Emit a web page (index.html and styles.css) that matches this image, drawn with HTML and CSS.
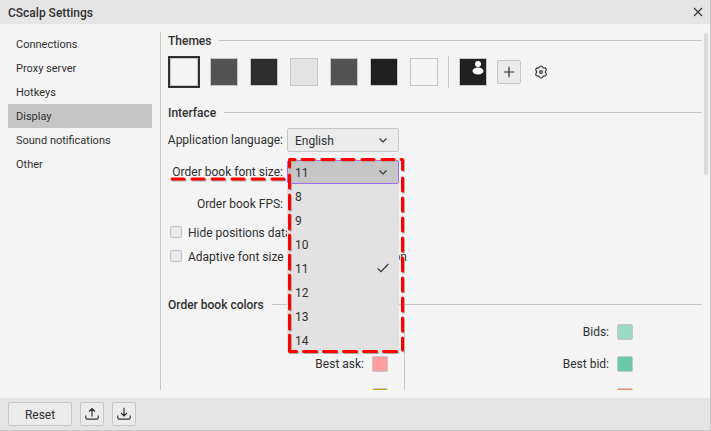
FILE: index.html
```html
<!DOCTYPE html>
<html lang="en">
<head>
<meta charset="utf-8">
<title>CScalp Settings</title>
<link rel="stylesheet" href="styles.css">
</head>
<body>
<div class="window">
  <header class="titlebar">
    <h1>CScalp Settings</h1>
    <button class="plain close" aria-label="Close"><svg width="10" height="10" viewBox="0 0 10 10"><path d="M1 1l8 8M9 1l-8 8"/></svg></button>
  </header>
  <div class="body">
    <nav class="sidebar">
      <a href="#connections">Connections</a>
      <a href="#proxy">Proxy server</a>
      <a href="#hotkeys">Hotkeys</a>
      <a href="#display" class="active" aria-current="page">Display</a>
      <a href="#sound">Sound notifications</a>
      <a href="#other">Other</a>
    </nav>
    <main class="content">
      <h2>Themes</h2>
      <div class="themes">
        <button class="theme selected light" aria-label="Theme 1"></button>
        <button class="theme gray" aria-label="Theme 2"></button>
        <button class="theme dark" aria-label="Theme 3"></button>
        <button class="theme pale" aria-label="Theme 4"></button>
        <button class="theme gray" aria-label="Theme 5"></button>
        <button class="theme black" aria-label="Theme 6"></button>
        <button class="theme light" aria-label="Theme 7"></button>
        <span class="separator"></span>
        <button class="theme black" aria-label="User theme"><svg width="26" height="26" viewBox="0 0 26 26"><circle class="solid" cx="18" cy="5" r="3"/><ellipse class="solid" cx="18" cy="12" rx="5.5" ry="3.5"/></svg></button>
        <button class="btn icon" aria-label="Add theme"><svg width="12" height="12" viewBox="0 0 12 12"><path d="M6 .8v10.400M.8 6h10.400"/></svg></button>
        <button class="plain gear" aria-label="Theme settings"><svg width="16" height="14" viewBox="-1 0 16 14"><path d="M4.600 2.900C5.600 2.400 5.600 1 7 1S8.400 2.400 9.400 2.900C10.800 2.600 11.600 3 12.200 4S11.400 6 11.400 7 12.900 9 12.200 10 10.400 11.200 9.400 11.100C8.400 11.600 8.400 13 7 13S5.600 11.600 4.600 11.100C3.400 11.300 2.400 11 1.800 10S2.600 8 2.600 7 1.100 5 1.800 4 3.600 2.700 4.600 2.900z"/><circle cx="7" cy="7" r="1.400"/></svg></button>
      </div>
      <h2>Interface</h2>
      <div class="form">
        <label for="language">Application language:</label>
        <div class="field"><select id="language"><option>English</option></select><svg class="chevron" width="8" height="5" viewBox="0 0 8 5"><path d="M.5 .5L4 4 7.500 .5"/></svg></div>
        <label for="font-size">Order book font size:<svg class="underline" width="120" height="6" viewBox="0 0 120 6"><path class="shade" d="M6 4h12M26 4h12M46 4h12M66 4h12M86 4h12M106 4h12"/><path class="mark" d="M5 3h12M25 3h12M45 3h12M65 3h12M85 3h12M105 3h12"/></svg></label>
        <div class="field open">
          <select id="font-size"><option>11</option></select><svg class="chevron" width="8" height="5" viewBox="0 0 8 5"><path d="M.5 .5L4 4 7.500 .5"/></svg>
          <ul class="menu">
            <li>8</li><li>9</li><li>10</li>
            <li>11<svg width="12" height="10" viewBox="0 0 12 10"><path d="M.7 5.500L4 8.700 11.300 1"/></svg></li>
            <li>12</li><li>13</li><li>14</li>
          </ul>
          <svg class="frame" width="122" height="200" viewBox="0 0 122 200">
            <defs><g id="dashes"><path d="M3.500 11V3.500H9M16 3.500h12M36 3.500h12M56 3.500h12M76 3.500h12M96 3.500h12M115 3.500h1.500v10M3.500 19v13M3.500 39v14M3.500 59v14M3.500 79v14M3.500 99v14M3.500 119v14M3.500 139v14M3.500 159v14M3.500 179v16.500h7M17.500 195.500h13M37.500 195.500h13M57.500 195.500h13M77.500 195.500h13M97.500 195.500h13M116.500 22v13M116.500 42v13M116.500 62v13M116.500 82v13M116.500 102v13M116.500 122v13M116.500 142v13M116.500 162v13M116.500 182v12"/></g></defs>
            <use class="shade" href="#dashes" x="1" y="1"/><use class="mark" href="#dashes"/>
          </svg>
        </div>
        <span class="label">Order book FPS:</span>
      </div>
      <div class="checks">
        <label><input type="checkbox"><span>Hide positions data</span></label>
        <label class="wide"><input type="checkbox"><span>Adaptive font size</span><span class="end">on</span></label>
      </div>
      <h2>Order book colors</h2>
      <div class="colors">
        <div class="side asks">
          <label class="second">Best ask:<button class="color best-ask" aria-label="Best ask color"></button></label>
          <button class="color ask-volume" aria-label="Ask volume color"></button>
        </div>
        <div class="side">
          <label>Bids:<button class="color bid" aria-label="Bids color"></button></label>
          <label>Best bid:<button class="color best-bid" aria-label="Best bid color"></button></label>
          <button class="color bid-volume" aria-label="Bid volume color"></button>
        </div>
      </div>
    </main>
    <div class="scrollbar"></div>
  </div>
  <footer class="footer">
    <button class="btn reset">Reset</button>
    <button class="btn icon" aria-label="Export settings"><svg width="14" height="14" viewBox="0 0 14 14"><path d="M7 9.500V1.500M4 4.500l3-3 3 3M.8 8.500v2.200q0 1.500 1.500 1.500h9.400q1.500 0 1.500-1.500V8.500"/></svg></button>
    <button class="btn icon" aria-label="Import settings"><svg width="14" height="14" viewBox="0 0 14 14"><path d="M7 .8v8M4 6l3 3 3-3M.8 8.500v2.200q0 1.500 1.500 1.500h9.400q1.500 0 1.500-1.500V8.500"/></svg></button>
  </footer>
</div>
</body>
</html>
```
FILE: styles.css
```css
* { box-sizing: border-box; }
body { margin: 0; background: #f4f4f4; color: #303030; font: 12px/24px Roboto, sans-serif; }
button, select, input { margin: 0; padding: 0; font: inherit; color: inherit; }
svg { display: block; fill: none; stroke: #333; stroke-width: 1.2; }
.solid { fill: #fff; stroke: none; }
.window { display: flex; flex-direction: column; height: 100vh; border: solid #c6c6c6; border-width: 0 1px 1px 0; }
.titlebar { display: flex; justify-content: space-between; align-items: center; height: 24px; flex: none; padding: 0 7px 0 8px; background: #e5e5e5; }
h1, h2 { margin: 0; font-size: 12px; font-weight: 500; }
h1 { line-height: 24px; padding-top: 2px; }
.plain { display: flex; border: 0; background: none; }
.body { display: flex; flex: 1; min-height: 0; padding: 8px 2px 8px 8px; }
.sidebar { width: 144px; flex: none; margin-right: 8px; font-size: 11px; }
.sidebar a { display: block; height: 24px; padding: 0 8px; line-height: 26px; color: inherit; text-decoration: none; }
.sidebar .active { background: #c6c6c6; }
.content { flex: 1; min-width: 0; overflow: hidden; padding-left: 7px; border-left: 1px solid #c6c6c6; }
h2 { display: flex; align-items: flex-start; gap: 8px; height: 16px; line-height: 18px; }
h2::after { content: ""; flex: 1; height: 1px; margin-top: 8px; background: #c6c6c6; }
.themes { display: flex; align-items: center; gap: 12px; height: 32px; margin: 8px 0 16px; padding-left: 2px; }
.theme { width: 28px; height: 28px; flex: none; border: 1px solid #c6c6c6; }
.theme.selected { outline: 2px solid #303030; }
.light { background: #f4f4f4; }
.gray { background: #525252; }
.dark { background: #2d2d2d; }
.pale { background: #e4e4e4; }
.black { background: #1f2120; }
.separator { width: 1px; height: 32px; margin: 0 -2px; background: #c6c6c6; }
.btn { display: flex; align-items: center; justify-content: center; height: 24px; border: 1px solid #c6c6c6; border-radius: 2px; background: #ebebeb; }
.btn.icon { width: 24px; margin-left: -2px; }
.form { display: grid; grid-template-columns: 115px 112px; column-gap: 4px; row-gap: 8px; margin-top: 8px; justify-items: end; }
.form > label { position: relative; white-space: nowrap; }
.field { position: relative; width: 112px; height: 24px; }
.field select { display: block; width: 100%; height: 24px; padding: 0 7px; border: 1px solid #c6c6c6; border-radius: 2px; background: #ebebeb; appearance: none; }
.field.open select { border-color: #9d6cf0; background: #c6c6c6; }
.chevron { position: absolute; right: 12px; top: 10px; pointer-events: none; }
.menu { position: absolute; z-index: 1; top: 24px; left: 0; width: 112px; margin: 0; padding: 0; list-style: none; background: #e2e2e2; }
.menu li { display: flex; align-items: flex-start; justify-content: space-between; height: 24px; padding: 0 10px 0 8px; line-height: 26px; }
.menu svg { margin-top: 7px; }
.frame { position: absolute; z-index: 2; top: -4px; left: -1px; }
.underline { position: absolute; top: 16px; right: -4px; }
.mark, .shade { stroke: #f00; stroke-width: 3; stroke-linecap: round; stroke-linejoin: round; }
.shade { stroke: #aaa; }
.checks { margin: 4px 0 28px 2px; }
.checks label { display: flex; align-items: center; gap: 6px; height: 24px; }
.checks span { line-height: 24px; padding-top: 2px; }
.checks .wide { width: 237px; }
.checks .end { margin-left: auto; }
.checks input { width: 12px; height: 12px; appearance: none; border: 1px solid #c6c6c6; border-radius: 2px; background: #ebebeb; }
.colors { display: flex; margin-top: 8px; }
.side { flex: 1; display: grid; grid-template-rows: 24px 24px 24px; row-gap: 8px; justify-items: end; padding-right: 69px; }
.asks { flex: none; width: 237px; padding-right: 16px; border-right: 1px solid #c6c6c6; }
.side label { display: flex; align-items: center; gap: 8px; }
.second { grid-row: 2; }
.color { width: 16px; height: 16px; border: 1px solid #c6c6c6; border-radius: 2px; }
.side > .color { grid-row: 3; margin-top: 4px; }
.best-ask { background: #ff9c9c; }
.ask-volume { background: #c9a800; }
.bid { background: #9ddac4; }
.best-bid { background: #68caa9; }
.bid-volume { background: #f08c50; }
.scrollbar { width: 4px; height: 142px; margin: 1px 0 0 2px; border-radius: 2px; background: #dadada; }
.footer { display: flex; align-items: center; gap: 8px; height: 32px; flex: none; padding-left: 8px; background: #e5e5e5; }
.footer .icon { margin: 0; }
.reset { width: 64px; padding-top: 2px; }
```
